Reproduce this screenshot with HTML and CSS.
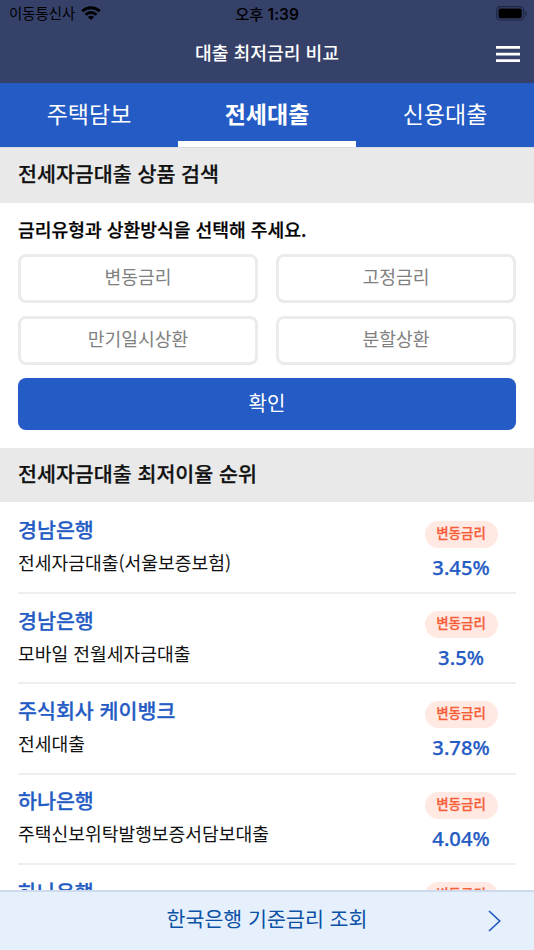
FILE: index.html
```
<!DOCTYPE html>
<html lang="ko">
<head>
<meta charset="utf-8">
<meta name="viewport" content="width=device-width, initial-scale=1">
<title>대출 최저금리 비교</title>
<link rel="stylesheet" href="styles.css">
</head>
<body>
<div class="app">
  <header class="top">
    <div class="status">
      <div class="carrier"><span>이동통신사</span>
        <svg class="wifi" width="20" height="14" viewBox="0 0 20 14"><g fill="none" stroke="#000" stroke-width="2.9"><path d="M1.2 5.2C6.2.5 13.8.5 18.8 5.2"/><path d="M4.6 8.7C7.6 5.8 12.4 5.8 15.4 8.7"/></g><path d="M6.9 10.9C8.7 9.2 11.3 9.2 13.1 10.9L10 14Z"/></svg>
      </div>
      <time class="clock">오후 <b>1:39</b></time>
      <svg class="battery" width="32" height="15" viewBox="0 0 32 15"><rect x=".7" y=".7" width="27" height="13.3" rx="4" fill="none" stroke="#1f2642" stroke-width="1.2"/><rect x="2.6" y="2.5" width="23.2" height="9.8" rx="2"/><path d="M29.3 5v4.8q1.5-.6 1.5-2.4T29.3 5Z" fill="#1f2642"/></svg>
    </div>
    <div class="titlebar">
      <h1>대출 최저금리 비교</h1>
      <svg class="menu" width="24" height="17" viewBox="0 0 24 17" fill="#fff"><path d="M0 0h24v2.7H0zM0 6.7h24v2.7H0zM0 13.2h24v2.7H0z"/></svg>
    </div>
  </header>
  <nav class="tabs">
    <span class="tab">주택담보</span>
    <span class="tab active">전세대출</span>
    <span class="tab">신용대출</span>
  </nav>
  <h2 class="section search-title">전세자금대출 상품 검색</h2>
  <section class="search">
    <p class="prompt">금리유형과 상환방식을 선택해 주세요.</p>
    <div class="options">
      <button class="option">변동금리</button>
      <button class="option">고정금리</button>
      <button class="option">만기일시상환</button>
      <button class="option">분할상환</button>
    </div>
    <button class="submit">확인</button>
  </section>
  <h2 class="section">전세자금대출 최저이율 순위</h2>
  <ul class="list">
    <li class="item"><div class="product"><h3>경남은행</h3><p>전세자금대출(서울보증보험)</p></div><div class="rate"><span class="badge">변동금리</span><strong>3.45%</strong></div></li>
    <li class="item"><div class="product"><h3>경남은행</h3><p>모바일 전월세자금대출</p></div><div class="rate"><span class="badge">변동금리</span><strong>3.5%</strong></div></li>
    <li class="item"><div class="product"><h3>주식회사 케이뱅크</h3><p>전세대출</p></div><div class="rate"><span class="badge">변동금리</span><strong>3.78%</strong></div></li>
    <li class="item"><div class="product"><h3>하나은행</h3><p>주택신보위탁발행보증서담보대출</p></div><div class="rate"><span class="badge">변동금리</span><strong>4.04%</strong></div></li>
    <li class="item"><div class="product"><h3>하나은행</h3></div><div class="rate"><span class="badge">변동금리</span></div></li>
  </ul>
  <footer class="base-rate">
    <span>한국은행 기준금리 조회</span>
    <svg class="chevron" width="13" height="22" viewBox="0 0 13 22" fill="none" stroke="#245bc4" stroke-width="1.7"><path d="M1 1L11.7 11L1 21"/></svg>
  </footer>
</div>
</body>
</html>
```
FILE: styles.css
```
* { box-sizing: border-box; }
body, h1, h2, h3, p, ul { margin: 0; padding: 0; }
body { font-family: "Noto Sans CJK KR", sans-serif; color: #111; background: #fff; }
button { font: inherit; padding: 0; }
.app { height: 950px; display: flex; flex-direction: column; overflow: hidden; }
.top { height: 83px; flex: none; background: #36416a; }
.status { height: 28px; display: grid; grid-template-columns: 1fr auto 1fr; align-items: center; padding: 0 6px 1px 9px; color: #000; font-size: 14.4px; line-height: 20px; }
.carrier { display: flex; align-items: center; gap: 6px; margin-top: -1px; }
.clock { margin-right: 3px; font-size: 15.3px; font-weight: 500; }
.clock b { font-family: Inter, sans-serif; font-size: 15.5px; font-weight: 600; }
.battery { justify-self: end; }
.titlebar { height: 50px; display: grid; grid-template-columns: 1fr auto 1fr; align-items: center; padding: 0 14px; }
h1 { grid-column: 2; margin-top: -3px; color: #fff; font-size: 18.2px; font-weight: 500; line-height: 26px; }
.menu { justify-self: end; margin-top: 3px; }
.tabs { height: 64px; flex: none; display: grid; grid-template-columns: repeat(3, 1fr); background: #245bc4; }
.tab { color: #fff; font-size: 23px; line-height: 60px; text-align: center; border-bottom: 6px solid transparent; height: 64px; }
.tab.active { font-weight: 700; border-bottom-color: #fff; }
.section { height: 54px; flex: none; padding-left: 18px; background: #e9e9e9; font-size: 20.6px; font-weight: 500; line-height: 51px; -webkit-text-stroke: .25px currentColor; }
.search-title { height: 56px; border-top: 1px solid #d8dce3; }
.search { height: 245px; flex: none; padding: 11px 18px 0; }
.prompt { color: #000; font-size: 18.2px; font-weight: 500; line-height: 30px; -webkit-text-stroke: .25px currentColor; }
.options { display: grid; grid-template-columns: 1fr 1fr; gap: 13px 18px; margin-top: 10px; }
.option { height: 49px; border: 3px solid #ebebeb; border-radius: 8px; background: #fff; color: #808080; font-size: 18.2px; line-height: 26px; padding-bottom: 5px; }
.submit { width: 100%; height: 52px; margin-top: 13px; border: 0; border-radius: 8px; background: #245bc4; color: #fff; font-size: 20px; line-height: 28px; padding-bottom: 3px; }
.list { list-style: none; margin: 0 18px; height: 388px; flex: none; overflow: hidden; }
.item { height: 90.3px; display: flex; justify-content: space-between; border-bottom: 2px solid #eee; }
.item:first-child { height: 92px; padding-top: 1.5px; }
.product { padding-top: 10.8px; }
h3 { color: #245bc4; font-size: 20.6px; font-weight: 500; line-height: 30px; -webkit-text-stroke: .25px currentColor; }
.product p { font-size: 18.2px; line-height: 26px; margin-top: 5px; }
.rate { width: 73px; margin-right: 18.5px; padding-top: 17.2px; display: flex; flex-direction: column; align-items: center; }
.badge { width: 73px; height: 27px; flex: none; border-radius: 14px; background: #ffe9e2; color: #f65d39; text-align: center; font-size: 13.5px; font-weight: 500; line-height: 22px; -webkit-text-stroke: .25px currentColor; }
.rate strong { color: #245bc4; font-family: "Noto Sans", sans-serif; font-size: 20.2px; font-weight: 500; line-height: 28px; margin-top: 5px; -webkit-text-stroke: .25px currentColor; }
.base-rate { height: 60px; flex: none; display: grid; grid-template-columns: 1fr auto 1fr; align-items: center; padding: 0 33px; background: #e6f0fc; border-top: 2px solid #cedbed; }
.base-rate span { grid-column: 2; color: #0b51a6; font-size: 20.6px; line-height: 30px; margin-top: -6px; }
.chevron { justify-self: end; margin-top: 0; }
```
